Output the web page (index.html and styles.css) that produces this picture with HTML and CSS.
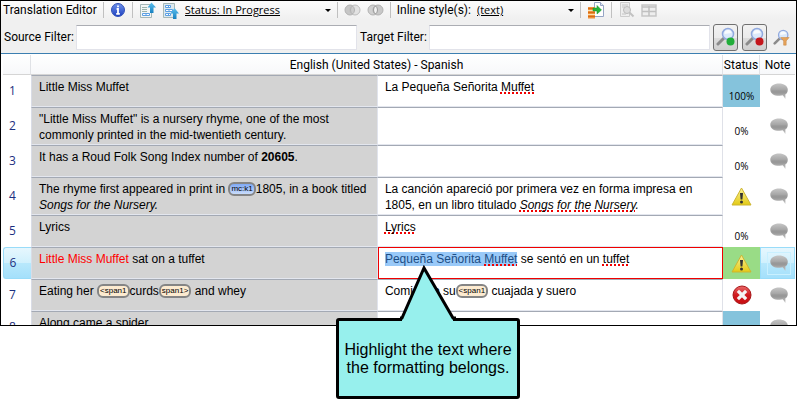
FILE: index.html
```html
<!DOCTYPE html>
<html lang="en">
<head>
<meta charset="utf-8">
<title>Translation Editor</title>
<link rel="stylesheet" href="styles.css">
</head>
<body>
<svg class="defs" aria-hidden="true">
  <defs>
    <linearGradient id="gray" x1="0" y1="0" x2="0" y2="1">
      <stop offset="0" stop-color="#c6c6c6"/><stop offset=".45" stop-color="#a2a2a2"/><stop offset=".55" stop-color="#999"/><stop offset="1" stop-color="#c4c4c4"/>
    </linearGradient>
    <linearGradient id="yellow" x1="0" y1="0" x2="0" y2="1">
      <stop offset="0" stop-color="#fbf29a"/><stop offset="1" stop-color="#e3ca14"/>
    </linearGradient>
    <linearGradient id="red" x1="0" y1="0" x2="0" y2="1">
      <stop offset="0" stop-color="#ea6a6a"/><stop offset=".5" stop-color="#cf1a1e"/><stop offset="1" stop-color="#c80e12"/>
    </linearGradient>
    <linearGradient id="blue" x1="0" y1="0" x2="0" y2="1">
      <stop offset="0" stop-color="#6f92ea"/><stop offset="1" stop-color="#1c3fc0"/>
    </linearGradient>
    <linearGradient id="sky" x1="0" y1="0" x2="0" y2="1">
      <stop offset="0" stop-color="#5cc0ee"/><stop offset="1" stop-color="#1780c0"/>
    </linearGradient>
    <symbol id="bubble" viewBox="0 0 18 17">
      <path d="M9 .5C4 .5.3 3 .3 6.700S4 12.800 9 12.800c1.600 0 2.600-.2 3.600-.5 1 .7 1.600 2 2.700 3.700.3-1.500.1-3 0-4.500 1.600-1.100 2.500-2.700 2.500-4.800C17.800 3 14 .5 9 .5z" fill="url(#gray)"/>
      <path d="M1.500 7h15c0 3-3 4.500-7.500 4.500S1.500 10 1.500 7z" fill="#8e8e8e" opacity=".2"/>
    </symbol>
    <symbol id="warning" viewBox="0 0 21 19">
      <path d="M10.500 1 20 18H1z" fill="url(#yellow)" stroke="#cdb531" stroke-linejoin="round"/>
      <path d="M9 6h3l-.6 6.500H9.600z" fill="#333"/><circle cx="10.500" cy="15" r="1.500" fill="#333"/>
    </symbol>
    <symbol id="error" viewBox="0 0 20 20">
      <circle cx="10" cy="10" r="9" fill="url(#red)" stroke="#a8181a"/>
      <path d="m7 7 6 6m0-6-6 6" stroke="#f4f4f4" stroke-width="3.200" stroke-linecap="square"/>
    </symbol>
    <symbol id="lens" viewBox="0 0 20 20">
      <path d="m8 11-6 6" stroke="#8b8b8b" stroke-width="3" stroke-linecap="round"/>
      <circle cx="12" cy="7" r="5.500" fill="#dbe9fb" stroke="#91a9df" stroke-width="1.500"/>
      <path d="M8.500 7a3.500 3.500 0 0 1 7-1z" fill="#fff" opacity=".8"/>
    </symbol>
  </defs>
</svg>

<main class="stage">
  <section class="editor">
    <div class="toolbar">
      <span class="title">Translation Editor</span>
      <span class="divider"></span>
      <button class="tool" aria-label="Information"><svg width="16" height="16" viewBox="0 0 16 16"><circle cx="8" cy="8" r="6.500" fill="url(#blue)" stroke="#3352b8"/><path d="M8 3.400v1.900M6.600 7H8v4.500M6.200 11.800h3.600" stroke="#fff" stroke-width="1.800" fill="none"/></svg></button>
      <span class="divider"></span>
      <button class="tool" aria-label="Previous segment"><svg width="17" height="17" viewBox="0 0 17 17"><path d="M1.500 2.500h11v13h-11z" fill="#f2f6f5" stroke="#a5b7b7"/><path d="M3 5.500h5M3 7.500h5M3 9.500h5" stroke="#9bb3ac"/><path d="M3.500 11.500h7v2h-7zM7 11v3" fill="#fff" stroke="#5b9fe3"/><path d="M12.500.5 17 5.500h-2.500V11h-3.500V5.500H8.500z" fill="url(#sky)"/></svg></button>
      <button class="tool tool-gap" aria-label="Previous block"><svg width="17" height="17" viewBox="0 0 17 17"><path d="M1.500 1.500h11v14h-11z" fill="#dce9ef" stroke="#a5b7b7"/><path d="M3.500 3.500h5v2h-5zM3.500 7.500h7v2h-7zM3.500 11.500h5v2h-5zM6.500 3v3M7 7v3M6.500 11v3" fill="#fff" stroke="#5b9fe3"/><path d="M12.500 6 17 11.500h-2.500V17h-3.500v-5.500H8.500z" fill="url(#sky)"/></svg></button>
      <span class="picker picker-status"><select aria-label="Status"><option>Status: In Progress</option></select></span>
      <span class="divider"></span>
      <button class="tool" aria-label="Merge"><svg width="17" height="14" viewBox="0 0 17 14"><circle cx="6" cy="7" r="5" fill="#c6c6c6" stroke="#b2b2b2"/><circle cx="11" cy="7" r="5" fill="#e2e2e2" stroke="#bdbdbd"/><path d="M8.500 3a5 5 0 0 1 0 8 5 5 0 0 1 0-8z" fill="#ccc" stroke="#b2b2b2"/></svg></button>
      <button class="tool tool-gap" aria-label="Intersect"><svg width="17" height="14" viewBox="0 0 17 14"><circle cx="6" cy="7" r="5" fill="#d0d0d0" stroke="#b2b2b2"/><circle cx="11" cy="7" r="5" fill="#c8c8c8" stroke="#b2b2b2"/><path d="M8.500 3a5 5 0 0 1 0 8 5 5 0 0 1 0-8z" fill="#f3f3f3" stroke="#999"/></svg></button>
      <span class="divider"></span>
      <label class="title" for="inline-style">Inline style(s):</label>
      <span class="picker picker-style"><select id="inline-style"><option>(text)</option></select></span>
      <span class="divider"></span>
      <button class="tool" aria-label="Insert from memory"><svg width="18" height="17" viewBox="0 0 18 17"><path d="M7.500.5h6l3 3v11h-9z" fill="#fff" stroke="#96a5c4"/><path d="M13.500.5v3h3" fill="#dce4f4" stroke="#96a5c4"/><path d="M1 5h7v11.500H1z" fill="#ee9138"/><path d="M1 8.500h7M1 12.500h7" stroke="#fce0b0"/><path d="M1 6.500h7M1 10.500h7M1 14.500h7" stroke="#d96b16"/><path d="M6 6h4V3.500L14.500 8 10 12V9H6z" fill="#27b43a" stroke="#15902b" stroke-width=".5"/></svg></button>
      <span class="divider"></span>
      <button class="tool" aria-label="Preview"><svg width="17" height="16" viewBox="0 0 17 16"><path d="M2.500.5h9v14h-9z" fill="#eee" stroke="#cdcdcd"/><path d="M4 3h6M4 5h3M4 12h4" stroke="#c4c4c4"/><circle cx="9" cy="8" r="3.500" fill="#ddd" stroke="#bbb"/><path d="m11.500 10.500 4 4" stroke="#c2c2c2" stroke-width="2"/></svg></button>
      <button class="tool tool-gap" aria-label="Grid layout"><svg width="16" height="14" viewBox="0 0 16 14"><path d="M1 2h14v11H1z" fill="#eee" stroke="#c6c6c6" stroke-width="1.500"/><path d="M1 4h14M1 8.500h14M8 3v10" stroke="#c0c0c0" stroke-width="1.500"/></svg></button>
    </div>

    <div class="filters">
      <label for="source-filter">Source Filter:</label>
      <input id="source-filter" type="text">
      <label for="target-filter">Target Filter:</label>
      <input id="target-filter" type="text">
      <button class="search" aria-label="Apply filter"><svg width="20" height="20" viewBox="0 0 20 20"><use href="#lens"/><circle cx="14.500" cy="14.500" r="4" fill="#21ad3a"/></svg></button>
      <button class="search" aria-label="Clear filter"><svg width="20" height="20" viewBox="0 0 20 20"><use href="#lens"/><circle cx="14.500" cy="14.500" r="4" fill="#c4161c"/></svg></button>
      <button class="tool funnel" aria-label="Filter options"><svg width="17" height="17" viewBox="0 0 20 20"><use href="#lens"/><path d="M9 10h10l-3.500 4v5h-3v-5z" fill="#e5a35a" stroke="#c98742" stroke-width=".6"/></svg></button>
    </div>

    <div class="sheet">
      <table>
        <colgroup><col class="c-num"><col class="c-src"><col><col class="c-status"><col class="c-note"></colgroup>
        <thead>
          <tr><th></th><th colspan="2">English (United States) - Spanish</th><th>Status</th><th>Note</th></tr>
        </thead>
        <tbody>
          <tr><th>1</th><td class="src">Little Miss Muffet</td><td class="tgt">La Pequeña Señorita <u>Muffet</u></td><td class="state done">100%</td><td class="note"><svg><use href="#bubble"/></svg></td></tr>
          <tr><th>2</th><td class="src">"Little Miss Muffet" is a nursery rhyme, one of the most commonly printed in the mid-twentieth century.</td><td class="tgt"></td><td class="state">0%</td><td class="note"><svg><use href="#bubble"/></svg></td></tr>
          <tr><th>3</th><td class="src">It has a Roud Folk Song Index number of <b>20605</b>.</td><td class="tgt"></td><td class="state">0%</td><td class="note"><svg><use href="#bubble"/></svg></td></tr>
          <tr><th>4</th><td class="src">The rhyme first appeared in print in <span class="chip chip-blue">mc:k1</span>1805, in a book titled <i>Songs for the Nursery.</i></td><td class="tgt">La canción apareció por primera vez en forma impresa en 1805, en un libro titulado <i><u>Songs</u> <u>for</u> <u>the</u> <u>Nursery</u>.</i></td><td class="state icon"><svg width="21" height="19"><use href="#warning"/></svg></td><td class="note"><svg><use href="#bubble"/></svg></td></tr>
          <tr><th>5</th><td class="src">Lyrics</td><td class="tgt"><u>Lyrics</u></td><td class="state">0%</td><td class="note"><svg><use href="#bubble"/></svg></td></tr>
          <tr class="current"><th>6</th><td class="src"><span class="match">Little Miss Muffet</span> sat on a tuffet</td><td class="tgt"><mark>Pequeña Señorita <u>Muffet</u></mark> se sentó en un <u>tuffet</u></td><td class="state icon"><svg width="21" height="19"><use href="#warning"/></svg></td><td class="note"><svg><use href="#bubble"/></svg></td></tr>
          <tr><th>7</th><td class="src">Eating her <span class="chip">&lt;span1</span>curds<span class="chip">span1&gt;</span> and whey</td><td class="tgt">Comiendo su<span class="chip">&lt;span1</span> cuajada y suero</td><td class="state icon"><svg width="20" height="20"><use href="#error"/></svg></td><td class="note"><svg><use href="#bubble"/></svg></td></tr>
          <tr><th>8</th><td class="src">Along came a spider</td><td class="tgt"></td><td class="state done"></td><td class="note"><svg><use href="#bubble"/></svg></td></tr>
        </tbody>
      </table>
    </div>
  </section>

  <aside class="callout">
    <svg class="pointer" width="56" height="56" viewBox="0 0 56 56"><path d="M2 54 24 4l29 50v2H2z" fill="#97f0ed"/><path d="M0 53h2L24 3l29 50h3" fill="none" stroke="#000" stroke-width="3"/></svg>
    <p>Highlight the text where<br>the formatting belongs.</p>
  </aside>
</main>
</body>
</html>
```
FILE: styles.css
```css
* { box-sizing: border-box; }

body {
  margin: 0;
  background: #fff;
  color: #000;
  font: 12px/16px Roboto, "Noto Sans", sans-serif;
}

.defs { position: absolute; width: 0; height: 0; }

/* Room below the editor for the callout that hangs over its edge */
.stage { position: relative; padding-bottom: 81px; }

.editor {
  border: 1px solid #000;
  background: #f0f0f0;
}

button, input, select { font: inherit; color: inherit; margin: 0; }

/* Toolbar */
.toolbar {
  display: flex;
  align-items: center;
  height: 18px;
  padding-left: 2px;
  background: linear-gradient(#fcfcfc, #f0f0f0);
  white-space: nowrap;
}

.divider {
  width: 1px;
  height: 16px;
  margin: 0 6px;
  background: #c0c0c0;
}

.tool {
  display: flex;
  padding: 0;
  border: 0;
  background: none;
}

.tool-gap { margin-left: 6px; }

.picker { position: relative; display: flex; }

.picker select {
  width: 100%;
  padding: 0;
  border: 0;
  background: none;
  appearance: none;
  font: 11px/16px "Open Sans", sans-serif;
  text-decoration: underline;
}

.picker::after {
  content: "";
  position: absolute;
  top: 7px;
  right: 0;
  border: 3px solid transparent;
  border-top-color: #000;
  border-bottom: 0;
}

.picker-status { width: 146px; margin-left: 6px; }
.picker-style { width: 97px; margin-left: 6px; }

/* Filters */
.filters {
  display: flex;
  align-items: center;
  height: 35px;
  padding: 2px 6px 0 3px;
  border-bottom: 1px solid #3c7fb1;
}

.filters input {
  flex: 1;
  min-width: 0;
  height: 25px;
  margin: 0 3px 0 2px;
  border: 1px solid #e2e3ea;
  border-top-color: #abadb3;
  background: #fff;
}

.search {
  display: flex;
  align-items: center;
  justify-content: center;
  width: 25px;
  height: 27px;
  padding: 0;
  border: 1px solid #707070;
  border-radius: 3px;
  background: linear-gradient(#f2f2f2, #ebebeb 50%, #ddd 50%, #cfcfcf);
}

.search + .search { margin-left: 4px; }
.funnel { margin-left: 6px; }

/* Segment table */
.sheet {
  height: 271px;
  padding: 1px 1px 0 2px;
  overflow: hidden;
  background: #fff;
}

table {
  width: 100%;
  border-collapse: separate;
  border-spacing: 0;
  table-layout: fixed;
}

.c-num { width: 28px; }
.c-src { width: 43.8%; }
.c-status { width: 37px; }
.c-note { width: 35px; }

th, td { padding: 0; }

thead th {
  height: 20px;
  border-right: 1px solid #e0e2e6;
  border-bottom: 1px solid #d5d5d5;
  background: linear-gradient(#fff, #f7f8fa);
  font: 12px/18px Roboto, sans-serif;
}

thead th:last-child { border-right: 0; }

tbody tr { height: 32px; }

tbody th {
  padding-right: 9px;
  color: #1c2f80;
  font: 12px/16px "Open Sans", sans-serif;
}

.src, .tgt {
  padding: 3px 4px 1px 7px;
  border-top: 1px solid #a3a9b4;
  border-bottom: 1px solid #e3e6ee;
  font: 12px/16px "Liberation Sans", sans-serif;
  vertical-align: top;
}

.src {
  background: #d3d3d3;
  border-left: 1px solid #d9dce6;
  border-right: 1px solid #e0e3ec;
}

.tgt { border-right: 1px solid #dfe1e8; }

u {
  text-decoration: underline dotted #f00000 2px;
  text-decoration-skip-ink: none;
  text-underline-offset: 1px;
}

.match { color: #f00; }

mark { background: #99c9f8; color: #1d4e85; }

.chip {
  display: inline-block;
  height: 14px;
  padding: 0 1px;
  border: 2px solid #858585;
  border-radius: 6px;
  background: #fdebd0;
  font: 8px/10px "Liberation Sans", sans-serif;
  vertical-align: 2px;
  margin: -2px 0;
}

.chip-blue { background: linear-gradient(#7fa9f5, #c9dcfa); }

.state {
  padding-top: 10px;
  font: 10px/12px "Open Sans", sans-serif;
  text-align: center;
}

.state.icon { padding: 0; }
.state svg { display: block; margin: 0 auto; }
.done { background: #85c3dc; }

.note { vertical-align: middle; }
.note svg { display: block; width: 18px; height: 17px; margin: 0 auto 0 10px; }

.current th, .current .note {
  background: linear-gradient(#e6f7fe, #d0f0fd 50%, #b8e8fc 50%, #a4e0fb);
  border: 1px solid #99dcf9;
}

.current th { border-right: 0; border-radius: 3px 0 0 3px; }
.current .note svg { margin-left: 9px; outline: 1px solid #c9f0ff; outline-offset: 2px; }
.current .tgt { outline: 1px solid #f00000; outline-offset: -1px; }
.current .state { background: #99dc86; }

/* Callout lying over the table */
.callout {
  position: absolute;
  top: 318px;
  left: 336px;
  width: 184px;
  height: 81px;
  display: flex;
  align-items: center;
  justify-content: center;
  border: 3px solid #000;
  border-radius: 3px;
  background: #97f0ed;
  font: 16px/18px "Liberation Sans", sans-serif;
  text-align: center;
}

.callout p { margin: 0; white-space: nowrap; }

.pointer { position: absolute; left: 61px; bottom: 75px; }
```
